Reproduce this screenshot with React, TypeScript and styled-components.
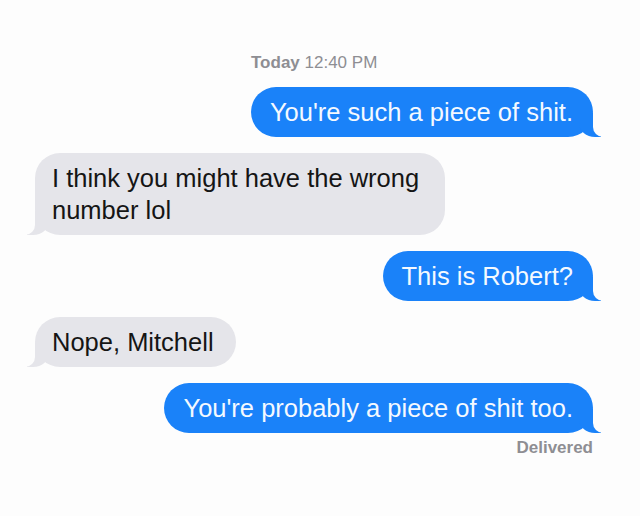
import styled, { createGlobalStyle, css } from "styled-components";

const GlobalStyle = createGlobalStyle`
	html, body {
		margin: 0;
		padding: 0;
		background: #fdfdfd;
	}
	body {
		font-family: "Liberation Sans", Arial, sans-serif;
	}
`;

const BLUE = "#1a82f9";
const GRAY = "#e5e5ea";
const PAGE = "#fdfdfd";

const Thread = styled.div`
	width: 640px;
	height: 516px;
	box-sizing: border-box;
	padding: 53px 47px 0 35px;
	display: flex;
	flex-direction: column;
	gap: 16px;
`;

// the stamp sits a little left of the page centre, as in the screenshot
const Stamp = styled.div`
	padding-left: 216px;
	margin-bottom: -2px;
	font-size: 17px;
	line-height: 20px;
	color: #8e8e93;

	b {
		font-weight: 700;
	}
`;

const tailMe = css`
	&::before,
	&::after {
		content: "";
		position: absolute;
		bottom: 0;
		height: 24px;
	}
	&::before {
		right: -8px;
		width: 22px;
		background: ${BLUE};
		border-bottom-left-radius: 16px 14px;
	}
	&::after {
		right: -26px;
		width: 26px;
		background: ${PAGE};
		border-bottom-left-radius: 10px;
	}
`;

const tailThem = css`
	&::before,
	&::after {
		content: "";
		position: absolute;
		bottom: 0;
		height: 24px;
	}
	&::before {
		left: -8px;
		width: 22px;
		background: ${GRAY};
		border-bottom-right-radius: 16px 14px;
	}
	&::after {
		left: -26px;
		width: 26px;
		background: ${PAGE};
		border-bottom-right-radius: 10px;
	}
`;

const Bubble = styled.div<{ $me?: boolean; $wide?: boolean }>`
	position: relative;
	box-sizing: border-box;
	max-width: ${(p) => (p.$wide ? "none" : "410px")};
	padding: ${(p) => (p.$me ? "9px 20px 9px 19px" : "9px 22px 9px 17px")};
	border-radius: 25px;
	font-size: 25.5px;
	line-height: 32px;
	align-self: ${(p) => (p.$me ? "flex-end" : "flex-start")};
	background: ${(p) => (p.$me ? BLUE : GRAY)};
	color: ${(p) => (p.$me ? "#f4f9ff" : "#151515")};
	${(p) => (p.$me ? tailMe : tailThem)};
`;

const Status = styled.div`
	align-self: flex-end;
	margin-top: -11px;
	font-size: 17px;
	line-height: 20px;
	font-weight: 700;
	color: #8e8e93;
`;

function App() {
	return (
		<>
			<GlobalStyle />
			<Thread>
				<Stamp>
					<b>Today</b> 12:40 PM
				</Stamp>
				<Bubble $me>You're such a piece of shit.</Bubble>
				<Bubble>I think you might have the wrong number lol</Bubble>
				<Bubble $me>This is Robert?</Bubble>
				<Bubble>Nope, Mitchell</Bubble>
				<Bubble $me $wide>
					You're probably a piece of shit too.
				</Bubble>
				<Status>Delivered</Status>
			</Thread>
		</>
	);
}

export default App;
